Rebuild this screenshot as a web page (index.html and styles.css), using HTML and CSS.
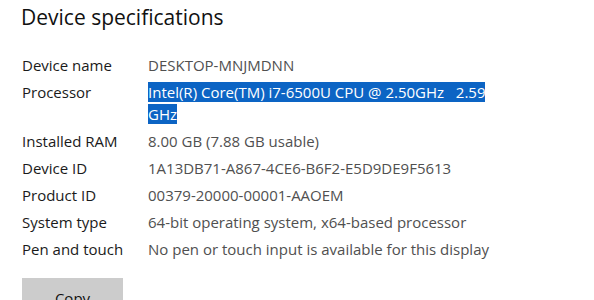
FILE: index.html
```html
<!DOCTYPE html>
<html>
<head>
<meta charset="utf-8">
<link rel="stylesheet" href="styles.css">
</head>
<body>
<div class="page">
  <h1 class="title">Device specifications</h1>
  <div class="specs">
    <div class="label">Device name</div><div class="value">DESKTOP-MNJMDNN</div>
    <div class="label">Processor</div><div class="value"><span class="sel">Intel(R) Core(TM) i7-6500U CPU @ 2.50GHz&nbsp;&nbsp;&nbsp;2.59 GHz</span></div>
    <div class="label">Installed RAM</div><div class="value">8.00 GB (7.88 GB usable)</div>
    <div class="label">Device ID</div><div class="value">1A13DB71-A867-4CE6-B6F2-E5D9DE9F5613</div>
    <div class="label">Product ID</div><div class="value">00379-20000-00001-AAOEM</div>
    <div class="label">System type</div><div class="value">64-bit operating system, x64-based processor</div>
    <div class="label">Pen and touch</div><div class="value">No pen or touch input is available for this display</div>
  </div>
  <button class="copy">Copy</button>
</div>
</body>
</html>
```
FILE: styles.css
```css
html, body {
  margin: 0;
  padding: 0;
  background: #ffffff;
}
body {
  font-family: "Open Sans", "Noto Sans", sans-serif;
  color: #1a1a1a;
  overflow: hidden;
}
.page {
  padding: 0 0 0 22px;
}
.title {
  margin: 0;
  padding-top: 2px;
  font-size: 21px;
  font-weight: 400;
  line-height: 30px;
  margin-left: -1px;
  color: #111;
}
.specs {
  margin-top: 22px;
  display: grid;
  grid-template-columns: 126px 356px;
  row-gap: 5px;
  font-size: 15px;
  line-height: 22px;
}
.label {
  color: #1a1a1a;
}
.value {
  color: #505050;
}
.sel {
  background: #0c64c4;
  color: #ffffff;
}
.copy {
  margin-top: 18px;
  width: 101px;
  height: 40px;
  border: none;
  background: #cccccc;
  font-family: inherit;
  font-size: 15px;
  color: #111;
  padding: 0;
}
```
